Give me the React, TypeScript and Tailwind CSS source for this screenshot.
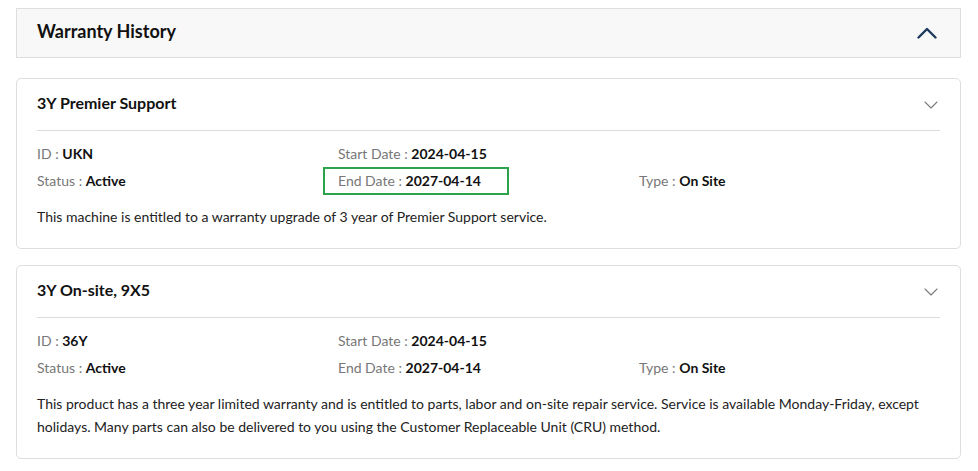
import React from 'react';

type Field = { label: string; value: string; highlight?: boolean };

type Warranty = {
  title: string;
  rows: (Field | null)[][];
  description: string;
};

const warranties: Warranty[] = [
  {
    title: '3Y Premier Support',
    rows: [
      [{ label: 'ID', value: 'UKN' }, { label: 'Start Date', value: '2024-04-15' }, null],
      [
        { label: 'Status', value: 'Active' },
        { label: 'End Date', value: '2027-04-14', highlight: true },
        { label: 'Type', value: 'On Site' },
      ],
    ],
    description: 'This machine is entitled to a warranty upgrade of 3 year of Premier Support service.',
  },
  {
    title: '3Y On-site, 9X5',
    rows: [
      [{ label: 'ID', value: '36Y' }, { label: 'Start Date', value: '2024-04-15' }, null],
      [
        { label: 'Status', value: 'Active' },
        { label: 'End Date', value: '2027-04-14' },
        { label: 'Type', value: 'On Site' },
      ],
    ],
    description:
      'This product has a three year limited warranty and is entitled to parts, labor and on-site repair service. Service is available Monday-Friday, except holidays. Many parts can also be delivered to you using the Customer Replaceable Unit (CRU) method.',
  },
];

const ChevronUp = () => (
  <svg width="20" height="12" viewBox="0 0 20 12" fill="none">
    <polyline points="1.5,10.5 10,2 18.5,10.5" stroke="#1d3a5c" strokeWidth="2.4" strokeLinecap="round" strokeLinejoin="round" />
  </svg>
);

const ChevronDown = () => (
  <svg width="14" height="8" viewBox="0 0 14 8" fill="none">
    <polyline points="1,1 7,7 13,1" stroke="#7a7a7a" strokeWidth="1.1" strokeLinecap="round" strokeLinejoin="round" />
  </svg>
);

const FieldCell = ({ field }: { field: Field | null }) => {
  if (!field) return <div />;
  return (
    <div className="relative flex items-center h-[27px]">
      {field.highlight && (
        <span className="absolute -left-[15px] top-0 w-[186px] h-[28px] border-2 border-[#2ba24c]" />
      )}
      <span className="text-[#777777]">{field.label} :&nbsp;</span>
      <span className="font-bold text-[#111111]">{field.value}</span>
    </div>
  );
};

const WarrantyCard = ({ item, className }: { item: Warranty; className: string }) => (
  <div className={`border border-[#dedede] rounded-[5px] bg-white ${className}`}>
    <div className="h-[51px] flex items-center justify-between pl-[20px] pr-[22px]">
      <span className="text-[16px] font-bold text-[#111111] pb-[3px]">{item.title}</span>
      <ChevronDown />
    </div>
    <div className="mx-[20px] border-t border-[#dcdcdc]" />
    <div className="px-[20px] pt-[9px] pb-[20px] text-[14px]">
      {item.rows.map((row, i) => (
        <div key={i} className="grid grid-cols-3">
          {row.map((f, j) => (
            <FieldCell key={j} field={f} />
          ))}
        </div>
      ))}
      <p className="mt-[11px] leading-[23px] text-[#222222]">{item.description}</p>
    </div>
  </div>
);

export default function App() {
  return (
    <div className="w-[978px] h-[471px] bg-white pt-[8px] pl-[16px] pr-[17px]" style={{ fontFamily: 'Lato, "Open Sans", sans-serif' }}>
      <div className="h-[50px] border border-[#dedede] bg-[#f8f8f8] flex items-center justify-between pl-[20px] pr-[23px]">
        <span className="text-[18px] font-bold text-[#111111] pb-[3px]">Warranty History</span>
        <ChevronUp />
      </div>
      <WarrantyCard item={warranties[0]} className="mt-[20px]" />
      <WarrantyCard item={warranties[1]} className="mt-[16px]" />
    </div>
  );
}
